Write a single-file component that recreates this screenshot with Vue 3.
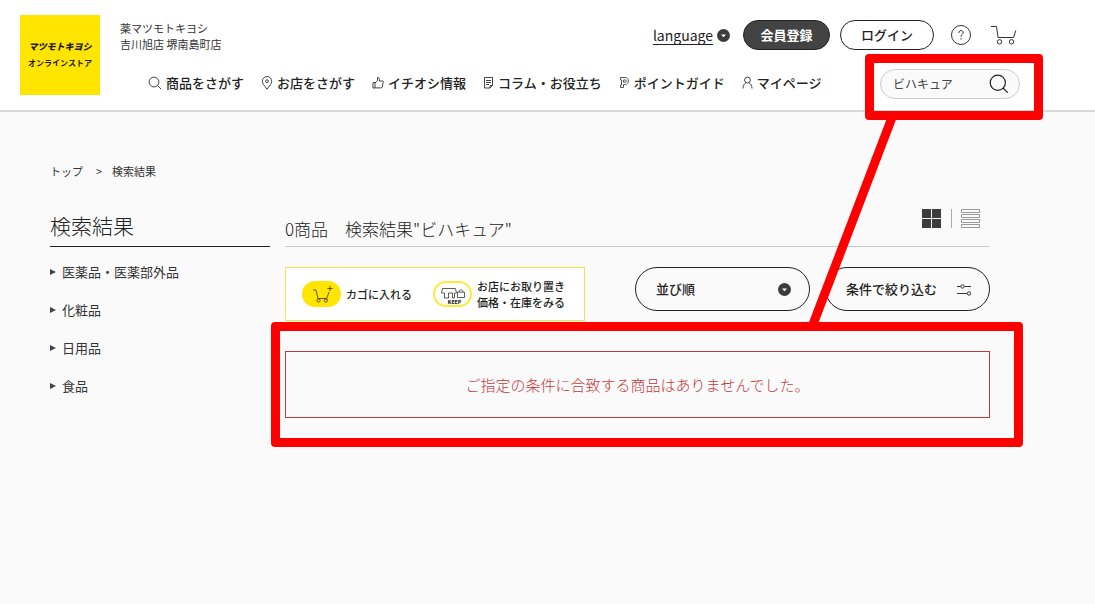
<script setup>
import { ref } from 'vue'

const keyword = ref('ビハキュア')
const sort = ref('')

const nav = [
  { icon: 'search', label: '商品をさがす' },
  { icon: 'pin', label: 'お店をさがす' },
  { icon: 'thumb', label: 'イチオシ情報' },
  { icon: 'doc', label: 'コラム・お役立ち' },
  { icon: 'point', label: 'ポイントガイド' },
  { icon: 'user', label: 'マイページ' },
]

const categories = ['医薬品・医薬部外品', '化粧品', '日用品', '食品']
</script>

<template>
  <div class="page">
    <header class="header">
      <a class="logo" href="#">
        <span class="logo-name">マツモトキヨシ</span>
        <span class="logo-sub">オンラインストア</span>
      </a>
      <div class="header-body">
        <div class="header-top">
          <p class="store">薬マツモトキヨシ<br />吉川旭店 堺南島町店</p>
          <div class="utils">
            <a class="language" href="#">
              <span>language</span>
              <svg width="13" height="13" viewBox="0 0 13 13" aria-hidden="true">
                <circle cx="6.5" cy="6.5" r="6.5" fill="#3c3c3c" />
                <path d="M4 5.500h5L6.500 8.300z" fill="#fff" />
              </svg>
            </a>
            <button class="pill dark" type="button">会員登録</button>
            <button class="pill light" type="button">ログイン</button>
            <a class="help" href="#" aria-label="ヘルプ">
              <svg width="20" height="20" viewBox="0 0 20 20" fill="none" stroke="#333">
                <circle cx="10" cy="10" r="9.500" />
                <path d="M7.800 8c0-1.500.9-2.400 2.200-2.400s2.200.8 2.200 2c0 1.800-2.200 2-2.200 4.200M10 13.200v1.400" />
              </svg>
            </a>
            <a class="cart" href="#" aria-label="カート">
              <svg width="27" height="20" viewBox="0 0 27 20" fill="none" stroke="#333">
                <path d="M1 1.500h5.500L8 12.500h15.500L25.800 5.500" />
                <circle cx="9.500" cy="16.800" r="2.200" />
                <circle cx="21.500" cy="16.800" r="2.200" />
              </svg>
            </a>
          </div>
        </div>
        <div class="header-bottom">
          <nav class="nav">
            <a v-for="item in nav" :key="item.icon" href="#">
              <svg v-if="item.icon === 'search'" width="14" height="14" viewBox="0 0 14 14">
                <circle cx="6" cy="6" r="4.900" />
                <path d="M9.500 9.500l3.500 3.500" />
              </svg>
              <svg v-else-if="item.icon === 'pin'" width="12" height="14" viewBox="0 0 12 14">
                <path d="M6 13.200C3.500 9.700 1.300 7.600 1.300 5.200a4.700 4.700 0 0 1 9.400 0c0 2.400-2.200 4.500-4.700 8z" />
                <circle cx="6" cy="5.200" r="1.400" />
              </svg>
              <svg v-else-if="item.icon === 'thumb'" width="12" height="14" viewBox="0 0 12 14">
                <path d="M1 6.500h2v5.500H1zM3 7L5.500 4.500V1.500c1.600-.3 2.200.8 1.700 3.500h3.600c.7 0 .7 1 .3 1.500l-.8 4.500c-.2.600-.6.900-1.200.9H3" />
              </svg>
              <svg v-else-if="item.icon === 'doc'" width="11" height="14" viewBox="0 0 11 14">
                <path d="M1.500 1.500h8v8l-2.500 2.500H1.500zM9.500 9.500H7v2.500M3 4.500h5M3 6.500h5M3 8.500h3" />
              </svg>
              <svg v-else-if="item.icon === 'point'" width="11" height="14" viewBox="0 0 11 14" stroke-width=".9">
                <path d="M1.500 1.500H6.200c4.200 0 4.200 7 0 7H4.500v3h-3v-2.500h1V4h-1zM4.500 4h1.800c1.300 0 1.300 2.200 0 2.200H4.500z" />
              </svg>
              <svg v-else width="11" height="14" viewBox="0 0 11 14">
                <circle cx="5.500" cy="4" r="2.900" />
                <path d="M1 12.500c0-3 1.300-4.700 3-5.700M10 12.500c0-3-1.300-4.700-3-5.700" />
              </svg>
              <span>{{ item.label }}</span>
            </a>
          </nav>
          <form class="search" @submit.prevent>
            <input v-model="keyword" type="text" aria-label="キーワード" />
            <button type="submit" aria-label="検索">
              <svg width="20" height="20" viewBox="0 0 20 20" fill="none" stroke="#222" stroke-width="1.200">
                <circle cx="8.800" cy="8.800" r="7.600" />
                <path d="M14 14l4.800 4.600" />
              </svg>
            </button>
            <span class="mark mark-search" aria-hidden="true"></span>
          </form>
        </div>
      </div>
    </header>

    <main class="main">
      <nav class="crumbs" aria-label="パンくず">
        <a href="#">トップ</a>
        <span>&gt;</span>
        <span>検索結果</span>
      </nav>

      <div class="columns">
        <aside>
          <h1>検索結果</h1>
          <ul class="cats">
            <li v-for="c in categories" :key="c"><a href="#">{{ c }}</a></li>
          </ul>
        </aside>

        <section>
          <div class="result-head">
            <h2>0商品　検索結果"ビハキュア"</h2>
            <div class="views">
              <button type="button" aria-label="グリッド表示">
                <svg width="19" height="19" viewBox="0 0 19 19" fill="#3c3c3c">
                  <path d="M0 0h9v9H0zM10 0h9v9h-9zM0 10h9v9H0zM10 10h9v9h-9z" />
                </svg>
              </button>
              <i></i>
              <button type="button" aria-label="リスト表示">
                <svg width="19" height="19" viewBox="0 0 19 19" fill="none" stroke="#999">
                  <path d="M.5.500h18v3H.5zM.5 5.500h18v3H.5zM.5 10.500h18v3H.5zM.5 15.500h18v3H.5z" />
                </svg>
              </button>
            </div>
          </div>

          <div class="tools">
            <div class="legend">
              <svg width="39" height="26" viewBox="0 0 39 26" fill="none" stroke="#333" stroke-width=".8">
                <rect width="39" height="26" rx="13" fill="#ffe500" stroke="none" />
                <path d="M11 9h3l2 8.500h8.700L27 11M25.500 7.500h5M28 5v5" />
                <circle cx="16.500" cy="19.500" r="1.600" />
                <circle cx="24" cy="19.500" r="1.600" />
              </svg>
              <span>カゴに入れる</span>
              <svg class="keep" width="39" height="26" viewBox="0 0 39 26" fill="none" stroke="#333" stroke-width=".8">
                <rect x="1" y="1" width="37" height="24" rx="12" fill="#fff" stroke="#ffe93b" stroke-width="2" />
                <path d="M9.500 7.500h13l1 4.500h-2v5h-2v-5h-4v5h-4v-5H8.500zM24.500 16.500v-5.300h7v5.300zM26 11c0-3 4-3 4 0" />
                <text x="21.500" y="23" text-anchor="middle" fill="#222" stroke="none">KEEP</text>
              </svg>
              <span>お店にお取り置き<br />価格・在庫をみる</span>
            </div>
            <div class="sort">
              <select v-model="sort" aria-label="並び順">
                <option value="">並び順</option>
              </select>
              <svg width="13" height="13" viewBox="0 0 13 13" aria-hidden="true">
                <circle cx="6.500" cy="6.500" r="6.500" fill="#3c3c3c" />
                <path d="M4 5.500h5L6.500 8.300z" fill="#fff" />
              </svg>
            </div>
            <button class="filter" type="button">
              <span>条件で絞り込む</span>
              <svg width="15" height="13" viewBox="0 0 15 13" fill="none" stroke="#333">
                <path d="M0 3.500h3.500M7.500 3.500H14M0 10.500h10" />
                <circle cx="5.500" cy="3.500" r="1.700" />
                <circle cx="12" cy="10.500" r="1.700" />
              </svg>
            </button>
          </div>

          <div class="empty">
            <p>ご指定の条件に合致する商品はありませんでした。</p>
            <span class="mark mark-empty" aria-hidden="true"></span>
          </div>
        </section>
      </div>
    </main>

    <svg class="connector" width="90" height="212" viewBox="0 0 90 212" aria-hidden="true">
      <path d="M85 0L4 212" stroke="#f00" stroke-width="9" />
    </svg>
  </div>
</template>

<style>
body {
  margin: 0;
  background: #fafafa;
}
</style>

<style scoped>
.page {
  position: relative;
  min-height: 100vh;
  box-sizing: border-box;
  background: #fafafa;
  color: #222;
  font-family: "Noto Sans CJK JP", "Noto Sans", sans-serif;
  font-size: 13px;
  line-height: 16px;
}
.page * {
  box-sizing: border-box;
}
a {
  color: inherit;
  text-decoration: none;
}
button,
input,
select {
  font: inherit;
  color: inherit;
  margin: 0;
  padding: 0;
  border: 0;
  background: none;
}
svg {
  display: block;
  flex: none;
}
h1,
h2,
p,
ul {
  margin: 0;
  padding: 0;
}
.header {
  display: flex;
  align-items: flex-start;
  gap: 20px;
  padding: 15px 75px 11px 20px;
  background: #fff;
  border-bottom: 2px solid #d8d8d8;
}
.logo {
  display: flex;
  flex: none;
  flex-direction: column;
  align-items: center;
  justify-content: center;
  width: 80px;
  height: 80px;
  background: #ffe500;
  color: #231815;
}
.logo-name {
  font-size: 9px;
  font-weight: 900;
  font-style: italic;
}
.logo-sub {
  font-size: 8px;
  font-weight: 700;
}
.header-body {
  flex: 1;
  padding-top: 5px;
}
.header-top,
.header-bottom {
  display: flex;
  align-items: flex-start;
  justify-content: space-between;
}
.store {
  font-size: 11px;
  color: #333;
}
.utils {
  display: flex;
  align-items: center;
  padding-right: 3px;
}
.language {
  display: flex;
  align-items: center;
  gap: 4px;
  margin-right: 13px;
  font-size: 14px;
}
.language span {
  text-decoration: underline;
  text-underline-offset: 3px;
}
.pill {
  height: 30px;
  border: 1px solid #222;
  border-radius: 15px;
  font-weight: 500;
}
.dark {
  width: 87px;
  margin-right: 10px;
  background: #434343;
  color: #fff;
  font-weight: 700;
}
.light {
  width: 94px;
  margin-right: 17px;
  background: #fff;
}
.help {
  margin-right: 19px;
}
.header-bottom {
  align-items: flex-start;
  margin-top: 17px;
  padding-left: 28px;
}
.nav {
  display: flex;
  gap: 17px;
  padding-top: 6px;
  font-weight: 500;
  white-space: nowrap;
}
.nav a {
  display: flex;
  align-items: center;
  gap: 4px;
}
.nav svg {
  fill: none;
  stroke: #444;
}
.search {
  position: relative;
  display: flex;
  align-items: center;
  width: 140px;
  height: 30px;
  padding: 0 10px 0 12px;
  background: #fafafa;
  border: 1px solid #ccc;
  border-radius: 15px;
}
.search input {
  flex: 1;
  min-width: 0;
  font-size: 12px;
  color: #444;
  outline: 0;
}
.mark {
  position: absolute;
  border: 9px solid #f00;
  border-radius: 4px;
  pointer-events: none;
}
.mark-search {
  inset: -16px -24px -22px -16px;
}
.mark-empty {
  inset: -30px -34px -30px -15px;
}
.connector {
  position: absolute;
  top: 115px;
  right: 197px;
  pointer-events: none;
}
.main {
  padding: 51px 105px 40px 50px;
}
.crumbs {
  display: flex;
  font-size: 11px;
  gap: 10px;
  color: #333;
}
.crumbs a {
  margin-right: 3px;
}
.columns {
  display: grid;
  grid-template-columns: 220px 1fr;
  gap: 15px;
  margin-top: 28px;
}
h1 {
  height: 40px;
  border-bottom: 1px solid #222;
  font-size: 21px;
  font-weight: 300;
  line-height: 36px;
}
.cats {
  padding-top: 6px;
  list-style: none;
  color: #333;
}
.cats a {
  display: flex;
  align-items: center;
  gap: 6px;
  height: 38px;
}
.cats a::before {
  content: "";
  border: solid transparent;
  border-width: 3px 0 3px 6px;
  border-left-color: #444;
}
.result-head {
  display: flex;
  justify-content: space-between;
  height: 40px;
  padding-right: 10px;
  border-bottom: 1px solid #ccc;
}
h2 {
  padding-top: 8px;
  font-size: 17px;
  font-weight: 300;
  line-height: 28px;
}
.views {
  display: flex;
  align-items: flex-start;
  padding-top: 2px;
  gap: 9px;
}
.views i {
  width: 1px;
  height: 19px;
  margin-left: 1px;
  background: #aaa;
}
.tools {
  display: flex;
  align-items: flex-start;
  gap: 15px;
  margin-top: 20px;
}
.legend {
  display: flex;
  align-items: center;
  width: 300px;
  height: 54px;
  margin-right: auto;
  padding-left: 16px;
  gap: 5px;
  background: #fff;
  border: 1px solid #f0e24a;
  font-size: 11px;
  font-weight: 500;
  white-space: nowrap;
}
.keep {
  margin-left: 16px;
}
.keep text {
  font-size: 5px;
  font-weight: 900;
}
.sort {
  display: grid;
  align-items: center;
  width: 175px;
}
.sort select,
.sort svg {
  grid-area: 1 / 1;
}
.sort svg {
  justify-self: end;
  margin-right: 19px;
  pointer-events: none;
}
.sort select,
.filter {
  height: 44px;
  padding: 0 17px 0 20px;
  border: 1px solid #222;
  border-radius: 22px;
  font-weight: 500;
}
.sort select {
  appearance: none;
}
.filter {
  display: flex;
  align-items: center;
  justify-content: space-between;
  width: 165px;
}
.empty {
  position: relative;
  margin-top: 30px;
  padding: 22px;
  border: 1px solid #c0393c;
  color: #c1393d;
  font-size: 15px;
  font-weight: 300;
  line-height: 21px;
  text-align: center;
}
</style>
